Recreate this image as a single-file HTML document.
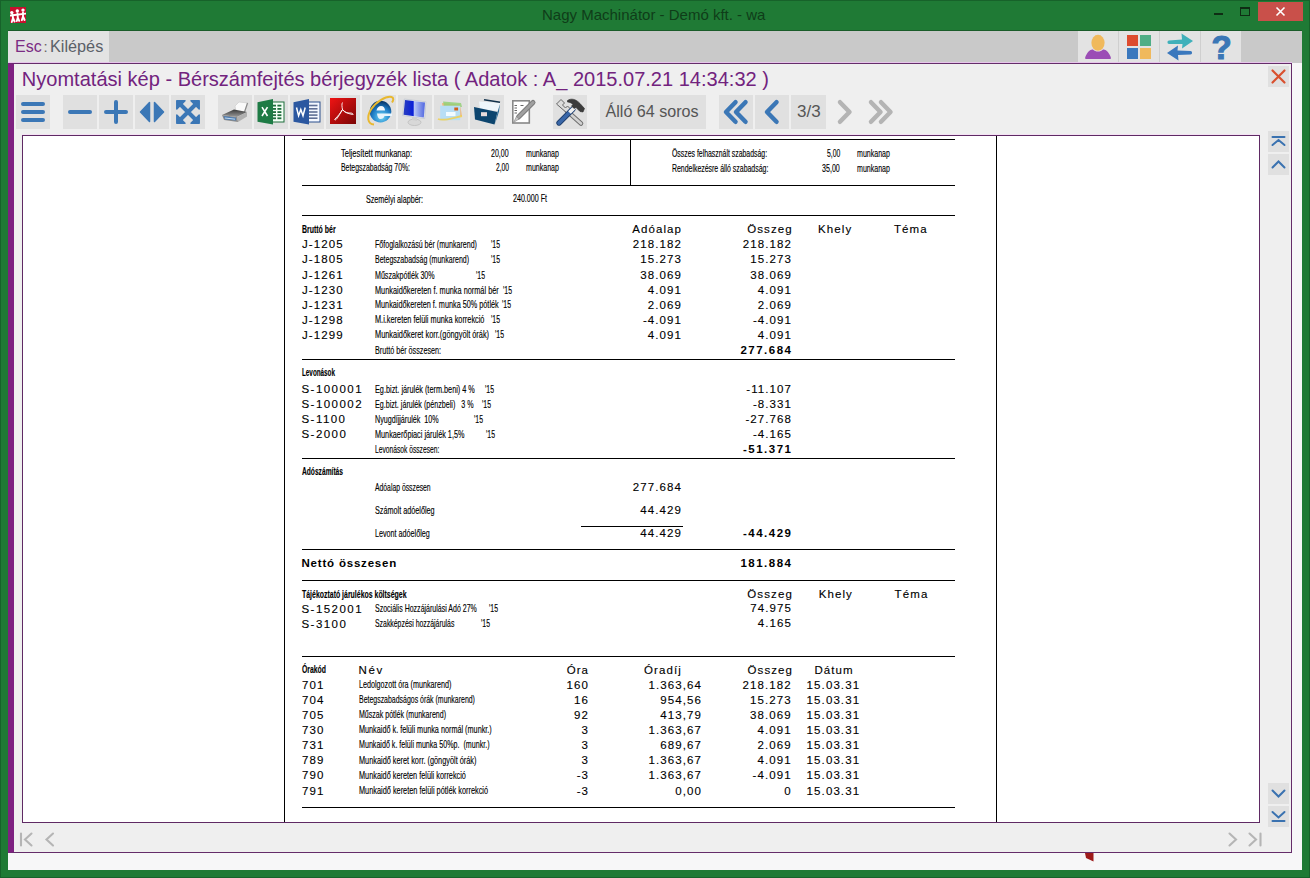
<!DOCTYPE html>
<html><head><meta charset="utf-8">
<style>
*{margin:0;padding:0;box-sizing:border-box}
html,body{width:1310px;height:878px;overflow:hidden;background:#1f7a35;font-family:"Liberation Sans",sans-serif}
.a{position:absolute}
#outer{left:0;top:0;width:1310px;height:878px;border:1px solid #17622a}
.tb{background:#e0e0e0}
.n{position:absolute;font-size:11.5px;letter-spacing:1.1px;color:#000;-webkit-text-stroke:0.12px #000;white-space:nowrap;line-height:1}
.c{position:absolute;font-size:11px;color:#000;-webkit-text-stroke:0.15px #000;white-space:nowrap;line-height:1;transform-origin:0 0}
.r{text-align:right}
.hl{position:absolute;height:1px;background:#000}
</style></head><body>
<div id="outer" class="a"></div>
<!-- title bar -->
<svg class="a" style="left:10px;top:7px" width="16" height="16" viewBox="10 7 16 16"><rect x="10" y="7" width="16" height="16" fill="#c7102e"/>
<g fill="#fff"><circle cx="11.8" cy="12.6" r="1.7"/><circle cx="17.3" cy="11" r="1.7"/><circle cx="23" cy="10.1" r="1.7"/></g>
<g stroke="#fff" stroke-width="1.9" stroke-linecap="round" fill="none">
<path d="M10.6 15.5L25.6 13.6"/>
<path d="M12.5 14.5L13 18M13 18L11.8 22M13 18L14.6 21.5"/>
<path d="M17.5 13.5L17.8 17.5M17.8 17.5L16.8 21M17.8 17.5L19.2 20.8"/>
<path d="M23 12.5L23 16.5M23 16.5L21.8 20.2M23 16.5L24.6 20"/>
</g></svg>
<div class="a" style="left:542px;top:6px;font-size:15px;color:#0f3d19;white-space:nowrap">Nagy Machinátor - Demó kft. - wa</div>
<div class="a" style="left:1214px;top:13px;width:9px;height:2px;background:#0f2d14"></div>
<div class="a" style="left:1240px;top:7px;width:10px;height:9px;border:1px solid #0f2d14;border-top-width:2px"></div>
<div class="a" style="left:1258px;top:2px;width:45px;height:19px;background:#c9504a"></div>
<svg class="a" style="left:1258px;top:2px" width="45" height="19" viewBox="0 0 45 19"><path d="M18.5 5.5L26.5 13.5M26.5 5.5L18.5 13.5" stroke="#fff" stroke-width="1.6"/></svg>

<!-- client -->
<div class="a" style="left:8px;top:30px;width:1294px;height:1px;background:#1a5c2a"></div>
<div class="a" style="left:8px;top:31px;width:1294px;height:839px;background:#f7f7f8"></div>
<div class="a" style="left:8px;top:31px;width:1294px;height:32px;background:#c9c9c9"></div>
<div class="a" style="left:8px;top:31px;width:101px;height:31px;background:#e3e3e3"></div>
<div class="a" style="left:14.5px;top:37px;font-size:17px;line-height:20px;color:#7b2c84;white-space:nowrap;transform:scaleX(0.94);transform-origin:0 0">Esc</div>
<div class="a" style="left:43.5px;top:37px;font-size:15px;line-height:20px;color:#666;white-space:nowrap">:</div>
<div class="a" style="left:49.5px;top:37px;font-size:17px;line-height:20px;color:#5b6068;white-space:nowrap;transform:scaleX(0.955);transform-origin:0 0">Kilépés</div>
<div class="a" style="left:1078px;top:31px;width:163px;height:31px;background:#e3e3e3"></div>
<div class="a" style="left:1118px;top:31px;width:1px;height:31px;background:#cfcfcf"></div>
<div class="a" style="left:1159px;top:31px;width:1px;height:31px;background:#cfcfcf"></div>
<div class="a" style="left:1200px;top:31px;width:1px;height:31px;background:#cfcfcf"></div>
<svg class="a" style="left:1078px;top:31px" width="163" height="31" viewBox="1078 31 163 31">
<ellipse cx="1098" cy="42.8" rx="6.6" ry="8" fill="#f0b95c"/>
<path d="M1086 59C1084.5 59 1085 57 1086.5 54.5C1088.5 50.5 1091 49.5 1093 49.5C1094.5 51 1096 51.5 1098 51.5C1100 51.5 1101.5 51 1103 49.5C1105 49.5 1107.5 50.5 1109.5 54.5C1111 57 1111.5 59 1110 59Z" fill="#9b4db5"/>
<rect x="1127" y="35" width="11" height="11" fill="#dd4b2e"/>
<rect x="1140" y="35" width="11" height="11" fill="#4fae86"/>
<rect x="1127" y="48" width="11" height="11" fill="#3a78bd"/>
<rect x="1140" y="48" width="11" height="11" fill="#f0b95c"/>
<path d="M1169 40.5L1182 39.5L1181.5 33.5L1193 41L1182 48.5L1182.5 44L1169 44C1167 44 1167 40.5 1169 40.5Z" fill="#3fb0ba"/>
<path d="M1190.5 54.5L1178 55L1178.5 60.5L1167 53L1178 45.5L1177.5 50.5L1190.5 51C1192.5 51 1192.5 54.5 1190.5 54.5Z" fill="#3a78bd"/>
<text x="1221.5" y="59" font-family="Liberation Sans" font-weight="bold" font-size="33" fill="#3b77b6" stroke="#3b77b6" stroke-width="1.2" text-anchor="middle">?</text>
</svg>

<!-- purple frame -->
<div class="a" style="left:8px;top:62px;width:1284px;height:1px;background:#e6c6ea"></div>
<div class="a" style="left:8px;top:63px;width:1284px;height:790px;border:1px solid #652d6a;border-left:6px solid #7e2181;background:#efefef"></div>
<div class="a" style="left:21.8px;top:68px;font-size:20.05px;color:#72237e;white-space:nowrap">Nyomtatási kép - Bérszámfejtés bérjegyzék lista ( Adatok : A_ 2015.07.21 14:34:32 )</div>

<!-- toolbar -->
<div class="a tb" style="left:16px;top:95px;width:34px;height:34px"></div>
<div class="a tb" style="left:63px;top:95px;width:34px;height:34px"></div>
<div class="a tb" style="left:99px;top:95px;width:34px;height:34px"></div>
<div class="a tb" style="left:135px;top:95px;width:34px;height:34px"></div>
<div class="a tb" style="left:171px;top:95px;width:34px;height:34px"></div>
<div class="a tb" style="left:218px;top:95px;width:34px;height:34px"></div>
<div class="a tb" style="left:254px;top:95px;width:34px;height:34px"></div>
<div class="a tb" style="left:290px;top:95px;width:34px;height:34px"></div>
<div class="a tb" style="left:326px;top:95px;width:34px;height:34px"></div>
<div class="a tb" style="left:362px;top:95px;width:34px;height:34px"></div>
<div class="a tb" style="left:398px;top:95px;width:34px;height:34px"></div>
<div class="a tb" style="left:434px;top:95px;width:34px;height:34px"></div>
<div class="a tb" style="left:470px;top:95px;width:34px;height:34px"></div>
<div class="a tb" style="left:553px;top:95px;width:34px;height:34px"></div>
<div class="a tb" style="left:600px;top:95px;width:106px;height:34px"></div>
<div class="a tb" style="left:719px;top:95px;width:34px;height:34px"></div>
<div class="a tb" style="left:755px;top:95px;width:34px;height:34px"></div>
<div class="a tb" style="left:791px;top:95px;width:35px;height:34px"></div>
<div class="a" style="left:605.5px;top:101.6px;font-size:16.1px;color:#555;white-space:nowrap">Álló 64 soros</div>
<div class="a" style="left:797px;top:101.5px;font-size:17px;color:#555;white-space:nowrap">3/3</div>
<svg class="a" style="left:0;top:90px" width="900" height="45" viewBox="0 90 900 45">
<g stroke="#3b77b6" stroke-width="4" stroke-linecap="round" fill="none">
<path d="M23 104H43M23 112H43M23 120H43"/>
<path d="M70 112H90"/>
<path d="M106 112H126M116 102V122"/>
</g>
<g fill="#3b77b6" stroke="#3b77b6" stroke-width="1.5" stroke-linejoin="round">
<path d="M149.5 102.5L140.5 112L149.5 121.5Z"/>
<path d="M154.5 102.5L163.5 112L154.5 121.5Z"/>
<path d="M176.8 100.8H185L176.8 109Z"/><path d="M199.2 100.8H191L199.2 109Z"/>
<path d="M176.8 123.2H185L176.8 115Z"/><path d="M199.2 123.2H191L199.2 115Z"/>
</g>
<path d="M179 103L197 121M197 103L179 121" stroke="#3b77b6" stroke-width="4"/>
<g stroke-width="4.5" stroke-linecap="round" stroke-linejoin="round" fill="none">
<path stroke="#3b77b6" d="M735.5 102.2L726 112L735.5 121.8M745.5 102.2L736 112L745.5 121.8"/>
<path stroke="#3b77b6" d="M776.5 102.2L767 112L776.5 121.8"/>
<path stroke="#b4b4b4" d="M840 102.2L849.5 112L840 121.8"/>
<path stroke="#b4b4b4" d="M871 102.2L880.5 112L871 121.8M881 102.2L890.5 112L881 121.8"/>
</g>
</svg>
<svg class="a" style="left:210px;top:90px" width="390" height="45" viewBox="210 90 390 45">
<defs>
<linearGradient id="pdfg" x1="0" y1="0" x2="1" y2="1"><stop offset="0" stop-color="#f01414"/><stop offset="1" stop-color="#7a0505"/></linearGradient>
<radialGradient id="ieg" cx="0.55" cy="0.75" r="0.7"><stop offset="0" stop-color="#6fd6f5"/><stop offset="0.6" stop-color="#1f7ec8"/><stop offset="1" stop-color="#0b3a6e"/></radialGradient>
<linearGradient id="mong" x1="0" y1="0" x2="1" y2="0"><stop offset="0" stop-color="#2a3fc0"/><stop offset="0.45" stop-color="#0a1fd8"/><stop offset="0.5" stop-color="#b9c7f5"/><stop offset="1" stop-color="#5066e0"/></linearGradient>
<linearGradient id="prg" x1="0" y1="0" x2="0" y2="1"><stop offset="0" stop-color="#3a3a3a"/><stop offset="1" stop-color="#9a9a9a"/></linearGradient>
</defs>
<!-- printer -->
<path d="M235 106L239 102L248 103L245 111.5L236 111.5Z" fill="#fafafa" stroke="#c8c8c8" stroke-width="0.6"/>
<path d="M247.5 103L244.5 112" stroke="#8a8a8a" stroke-width="1.2"/>
<path d="M222 115L234 109.5L247 112L237 117Z" fill="url(#prg)"/>
<path d="M237 117L247 112L247 116.5L238 122Z" fill="#b0b0b0"/>
<path d="M222 115L237 117L238 122L224 120Z" fill="#8c8c8c"/>
<path d="M223.5 116L236 117.8L236 120.5L225 119.5Z" fill="#4f7fb5"/>
<path d="M225 118L235 119.2" stroke="#cfe3f5" stroke-width="0.9"/>
<!-- excel -->
<rect x="272.5" y="102" width="11.5" height="20" fill="#f4fff6" stroke="#1e6e3c" stroke-width="1"/>
<g fill="#1e6e3c"><rect x="273" y="104.7" width="3" height="1.8"/><rect x="277.4" y="104.7" width="4" height="1.8"/><rect x="273" y="108" width="3" height="1.8"/><rect x="277.4" y="108" width="4" height="1.8"/><rect x="273" y="111.2" width="3" height="1.8"/><rect x="277.4" y="111.2" width="4" height="1.8"/><rect x="273" y="114.3" width="3" height="1.8"/><rect x="277.4" y="114.3" width="4" height="1.8"/><rect x="273" y="117.4" width="3" height="1.8"/><rect x="277.4" y="117.4" width="4" height="1.8"/></g>
<path d="M257.5 102.2L273 99L273 124.5L257.5 121.7Z" fill="#1e7b45"/>
<path d="M262 107.2L267.5 116M267.5 107.2L262 116" stroke="#fff" stroke-width="1.6"/>
<!-- word -->
<rect x="308.5" y="102" width="11.5" height="20" fill="#f4f8ff" stroke="#2b4f8c" stroke-width="1"/>
<g fill="#5f6f95"><rect x="309" y="104.7" width="8.5" height="1.6"/><rect x="309" y="108" width="8.5" height="1.6"/><rect x="309" y="111.2" width="8.5" height="1.6"/><rect x="309" y="114.3" width="8.5" height="1.6"/><rect x="309" y="117.4" width="8.5" height="1.6"/></g>
<path d="M293.5 102.2L309 99L309 124.5L293.5 121.7Z" fill="#2b57a0"/>
<path d="M296.5 107.5L298.6 115.7L300.8 109.5L303 115.7L305.2 107.5" stroke="#fff" stroke-width="1.5" fill="none" stroke-linejoin="miter"/>
<!-- pdf -->
<rect x="330" y="98" width="26" height="26" fill="url(#pdfg)"/>
<path d="M342.5 102.5C341.5 104 342 107 342.5 109.5C340.5 113 338 116 335 119C334 120 335.5 120.5 336.5 119C338.5 116.5 340.5 113 342.5 109.5C344.5 112 347.5 113.5 352.5 114.5C354 115 353 113 350.5 113C347 113 345 113 342.5 109.5" stroke="#fff" stroke-width="0.9" fill="none"/>
<!-- ie -->
<circle cx="380.5" cy="111.6" r="10.8" fill="url(#ieg)"/>
<path d="M376.5 110.5C377 107.5 379 106 381 106C383.5 106 385 107.8 385 110.5Z" fill="#f4f8fc"/>
<path d="M377 113.5H392V116H384.5C384 118 382.5 119 380.5 119C378.5 119 377.3 117 377 113.5Z" fill="#e8f4fc"/>
<path d="M374 124.5C367.5 124 366.5 117 371 109.5C376 101.5 386 96 391.5 97C394 97.5 393.5 100.5 392 102.5" fill="none" stroke="#e8b830" stroke-width="2"/>
<!-- monitor -->
<ellipse cx="414.5" cy="122.3" rx="6.5" ry="3.2" fill="#d8d8d8" stroke="#bdbdbd" stroke-width="0.8"/>
<path d="M412 117L417 118L417 121L412 120Z" fill="#cfcfcf"/>
<path d="M404.3 99L426 101.8L424.7 118.6L402.5 115.6Z" fill="#e4e8ee" stroke="#c4c8d0" stroke-width="0.8"/>
<path d="M405 100L425 102.6L423.8 117.5L403.5 114.8Z" fill="url(#mong)"/>
<!-- mail -->
<path d="M442 103L460 104.5L462 116L444 117Z" fill="#f5b06a" opacity="0.8"/>
<path d="M443 101.5L461 103L462 107L444 106Z" fill="#8fd070" opacity="0.8"/>
<rect x="440.2" y="105.7" width="20" height="14.5" fill="#b8def5"/>
<rect x="454.3" y="107.5" width="3.8" height="3" fill="#d0601a"/>
<rect x="446" y="112" width="9.5" height="4" fill="#f2fbff"/>
<path d="M438 119C444 121.5 452 118 462 116" stroke="#f0d050" stroke-width="1.8" fill="none" opacity="0.85"/>
<!-- cabinet -->
<path d="M479 101.5L500 103L499 111L480 109Z" fill="#eef6fb"/>
<path d="M484 99.8L500 102.3" stroke="#10304a" stroke-width="1.4"/>
<path d="M474 107L497.5 112L494.5 124.5L475 119.5Z" fill="#0d456e"/>
<path d="M497.5 112L500 104L499 111.5L495 124Z" fill="#2a6a94"/>
<rect x="481" y="112.2" width="6" height="4" fill="#e8dcdc" stroke="#cfc" stroke-width="0"/>
<!-- notepad -->
<rect x="512.8" y="100.8" width="16.5" height="22.2" fill="#fff" stroke="#888" stroke-width="1.6"/>
<g stroke="#555" stroke-width="0.9"><path d="M514.5 105.5H517M520.5 105.5H523.5M514.5 108H517M514.5 110.5H517M514.5 113H517"/></g>
<path d="M533 102.5L518.5 117" stroke="#7c7c7c" stroke-width="5" stroke-linecap="round"/><path d="M533 102.5L518.5 117" stroke="#a0a0a0" stroke-width="3" stroke-linecap="round"/><path d="M516.5 116.5L519 119L513.5 122.5Z" fill="#c8c8c8" stroke="#888" stroke-width="0.6"/>
<!-- tools -->
<path d="M567 111L581 123.5" stroke="#6e6e6e" stroke-width="4.6" stroke-linecap="round"/>
<path d="M567 111L581 123.5" stroke="#d2d2d2" stroke-width="2.6" stroke-linecap="round"/>
<path d="M556.5 104L561 99.5L564.5 103L562.5 105L565.5 108L567.5 106L571 109.5L567.5 113.5Z" fill="#dcdcdc" stroke="#666" stroke-width="1"/>
<path d="M573 109L559 123" stroke="#1f3f6e" stroke-width="5.4" stroke-linecap="round"/>
<path d="M573 109L559 123" stroke="#3a67a8" stroke-width="3.6" stroke-linecap="round"/>
<path d="M569.5 112.5L575 107" stroke="#f0f0f0" stroke-width="3.8"/>
<path d="M567.5 100.5C571 98 576 99 580 103.5L584.5 108.5L583 112L580 111.5L576 107.5L574 108.5L571.5 106L573 104.5C571.5 103 569.5 102 567.5 102Z" fill="#3c3c3c" stroke="#2a2a2a" stroke-width="0.6"/>
</svg>
<!-- side buttons -->
<div class="a tb" style="left:1268px;top:66px;width:21px;height:21px"></div>
<svg class="a" style="left:1268px;top:66px" width="21" height="21" viewBox="0 0 21 21"><path d="M4.5 4.5L16.5 16.5M16.5 4.5L4.5 16.5" stroke="#d9502e" stroke-width="2.2" stroke-linecap="round"/></svg>
<div class="a tb" style="left:1268px;top:131px;width:21px;height:21px"></div>
<div class="a tb" style="left:1268px;top:154px;width:21px;height:21px"></div>
<div class="a tb" style="left:1268px;top:783px;width:21px;height:21px"></div>
<div class="a tb" style="left:1268px;top:806px;width:21px;height:21px"></div>
<svg class="a" style="left:1268px;top:131px" width="21" height="700" viewBox="1268 131 21 700">
<g stroke="#3a72b0" stroke-width="2" stroke-linecap="round" fill="none">
<path d="M1272.5 137H1284.5M1272.5 145L1278.5 140L1284.5 145"/>
<path d="M1272.5 167.5L1278.5 161.5L1284.5 167.5"/>
<path d="M1272.5 790.5L1278.5 796.5L1284.5 790.5"/>
<path d="M1272.5 812L1278.5 817.5L1284.5 812M1272.5 821H1284.5"/>
</g></svg>
<svg class="a" style="left:0;top:823px" width="1310" height="45" viewBox="0 823 1310 45">
<g stroke="#b5b5b5" stroke-width="2.1" fill="none" stroke-linecap="round">
<path d="M21 833.5V845.5M31.5 833.5L25 839.5L31.5 845.5"/>
<path d="M53 833.5L46.5 839.5L53 845.5"/>
<path d="M1229.5 833.5L1236 839.5L1229.5 845.5"/>
<path d="M1249.5 833.5L1256 839.5L1249.5 845.5M1260.5 833.5V845.5"/>
</g>
<path d="M1085 853H1093.5V861.5L1086 858Z" fill="#9e1b1b"/>
</svg>
<div class="a" style="left:22px;top:134px;width:1238px;height:1px;background:#f4e2f4"></div>
<!-- doc frame -->
<div class="a" style="left:22px;top:135px;width:1238px;height:688px;border:1px solid #5f2a64;background:#fff;overflow:hidden">
</div>
<!--DOC-->
<div class="a" style="left:284px;top:136px;width:1px;height:686px;background:#000"></div>
<div class="a" style="left:996px;top:136px;width:1px;height:686px;background:#000"></div>
<div class="hl" style="left:302px;top:139px;width:653px"></div>
<div class="a" style="left:630px;top:139px;width:1px;height:46px;background:#000"></div>
<div class="hl" style="left:302px;top:185px;width:653px"></div>
<div class="hl" style="left:302px;top:215px;width:653px"></div>
<div class="c" style="left:341.0px;top:147.7px;transform:scaleX(0.683)">Teljesített munkanap:</div>
<div class="c" style="left:341.0px;top:162.3px;transform:scaleX(0.627)">Betegszabadság 70%:</div>
<div class="c" style="left:491.0px;top:147.7px;transform:scaleX(0.639)">20,00</div>
<div class="c" style="left:495.5px;top:162.3px;transform:scaleX(0.612)">2,00</div>
<div class="c" style="left:526.0px;top:147.7px;transform:scaleX(0.642)">munkanap</div>
<div class="c" style="left:526.0px;top:162.3px;transform:scaleX(0.642)">munkanap</div>
<div class="c" style="left:672.0px;top:148.0px;transform:scaleX(0.627)">Összes felhasznált szabadság:</div>
<div class="c" style="left:672.0px;top:162.5px;transform:scaleX(0.630)">Rendelkezésre álló szabadság:</div>
<div class="c" style="left:826.5px;top:148.0px;transform:scaleX(0.622)">5,00</div>
<div class="c" style="left:822.0px;top:162.5px;transform:scaleX(0.646)">35,00</div>
<div class="c" style="left:857.0px;top:148.0px;transform:scaleX(0.642)">munkanap</div>
<div class="c" style="left:857.0px;top:162.5px;transform:scaleX(0.642)">munkanap</div>
<div class="c" style="left:366.0px;top:193.5px;transform:scaleX(0.652)">Személyi alapbér:</div>
<div class="c" style="left:513.0px;top:193.2px;transform:scaleX(0.647)">240.000 Ft</div>
<div class="c" style="left:302.0px;top:223.5px;font-weight:bold;transform:scaleX(0.632)">Bruttó bér</div>
<div class="n" style="right:627.9px;top:223.9px;">Adóalap</div>
<div class="n" style="right:517.2px;top:223.9px;">Összeg</div>
<div class="n" style="left:818.0px;top:223.9px;">Khely</div>
<div class="n" style="left:894.0px;top:223.9px;">Téma</div>
<div class="n" style="left:302.0px;top:238.9px;">J-1205</div>
<div class="c" style="left:375.0px;top:238.5px;transform:scaleX(0.644)">Főfoglalkozású bér (munkarend)</div>
<div class="c" style="left:491.4px;top:238.5px;transform:scaleX(0.627)">'15</div>
<div class="n" style="right:627.9px;top:238.9px;">218.182</div>
<div class="n" style="right:517.9px;top:238.9px;">218.182</div>
<div class="n" style="left:302.0px;top:253.9px;">J-1805</div>
<div class="c" style="left:375.0px;top:253.5px;transform:scaleX(0.638)">Betegszabadság (munkarend)</div>
<div class="c" style="left:491.4px;top:253.5px;transform:scaleX(0.627)">'15</div>
<div class="n" style="right:627.9px;top:253.9px;">15.273</div>
<div class="n" style="right:517.9px;top:253.9px;">15.273</div>
<div class="n" style="left:302.0px;top:269.9px;">J-1261</div>
<div class="c" style="left:375.0px;top:269.5px;transform:scaleX(0.646)">Műszakpótlék 30%</div>
<div class="c" style="left:476.0px;top:269.5px;transform:scaleX(0.627)">'15</div>
<div class="n" style="right:627.9px;top:269.9px;">38.069</div>
<div class="n" style="right:517.9px;top:269.9px;">38.069</div>
<div class="n" style="left:302.0px;top:284.9px;">J-1230</div>
<div class="c" style="left:375.0px;top:284.5px;transform:scaleX(0.668)">Munkaidőkereten f. munka normál bér</div>
<div class="c" style="left:503.4px;top:284.5px;transform:scaleX(0.627)">'15</div>
<div class="n" style="right:627.9px;top:284.9px;">4.091</div>
<div class="n" style="right:517.9px;top:284.9px;">4.091</div>
<div class="n" style="left:302.0px;top:299.8px;">J-1231</div>
<div class="c" style="left:375.0px;top:299.4px;transform:scaleX(0.661)">Munkaidőkereten f. munka 50% pótlék</div>
<div class="c" style="left:502.0px;top:299.4px;transform:scaleX(0.627)">'15</div>
<div class="n" style="right:627.9px;top:299.8px;">2.069</div>
<div class="n" style="right:517.9px;top:299.8px;">2.069</div>
<div class="n" style="left:302.0px;top:314.8px;">J-1298</div>
<div class="c" style="left:375.0px;top:314.4px;transform:scaleX(0.668)">M.i.kereten felüli munka korrekció</div>
<div class="c" style="left:491.4px;top:314.4px;transform:scaleX(0.627)">'15</div>
<div class="n" style="right:627.9px;top:314.8px;">-4.091</div>
<div class="n" style="right:517.9px;top:314.8px;">-4.091</div>
<div class="n" style="left:302.0px;top:329.8px;">J-1299</div>
<div class="c" style="left:375.0px;top:329.4px;transform:scaleX(0.671)">Munkaidőkeret korr.(göngyölt órák)</div>
<div class="c" style="left:495.4px;top:329.4px;transform:scaleX(0.627)">'15</div>
<div class="n" style="right:627.9px;top:329.8px;">4.091</div>
<div class="n" style="right:517.9px;top:329.8px;">4.091</div>
<div class="c" style="left:375.0px;top:344.5px;transform:scaleX(0.654)">Bruttó bér összesen:</div>
<div class="n" style="right:517.5px;top:344.9px;font-weight:bold;-webkit-text-stroke:0;letter-spacing:1.5px;">277.684</div>
<div class="hl" style="left:302px;top:359px;width:653px"></div>
<div class="c" style="left:302.0px;top:367.4px;font-weight:bold;transform:scaleX(0.574)">Levonások</div>
<div class="n" style="left:301.5px;top:384.0px;letter-spacing:1.45px;">S-100001</div>
<div class="c" style="left:375.0px;top:383.6px;transform:scaleX(0.664)">Eg.bizt. járulék (term.beni) 4 %</div>
<div class="c" style="left:484.5px;top:383.6px;transform:scaleX(0.627)">'15</div>
<div class="n" style="right:517.9px;top:384.0px;">-11.107</div>
<div class="n" style="left:301.5px;top:399.1px;letter-spacing:1.45px;">S-100002</div>
<div class="c" style="left:375.0px;top:398.7px;transform:scaleX(0.650)">Eg.bizt. járulék (pénzbeli)&nbsp;&nbsp; 3 %</div>
<div class="c" style="left:481.6px;top:398.7px;transform:scaleX(0.627)">'15</div>
<div class="n" style="right:517.9px;top:399.1px;">-8.331</div>
<div class="n" style="left:301.5px;top:414.1px;letter-spacing:1.45px;">S-1100</div>
<div class="c" style="left:375.0px;top:413.7px;transform:scaleX(0.651)">Nyugdíjjárulék&nbsp; 10%</div>
<div class="c" style="left:474.2px;top:413.7px;transform:scaleX(0.627)">'15</div>
<div class="n" style="right:517.9px;top:414.1px;">-27.768</div>
<div class="n" style="left:301.5px;top:429.1px;letter-spacing:1.45px;">S-2000</div>
<div class="c" style="left:375.0px;top:428.7px;transform:scaleX(0.662)">Munkaerőpiaci járulék 1,5%</div>
<div class="c" style="left:486.2px;top:428.7px;transform:scaleX(0.627)">'15</div>
<div class="n" style="right:517.9px;top:429.1px;">-4.165</div>
<div class="c" style="left:375.0px;top:443.7px;transform:scaleX(0.608)">Levonások összesen:</div>
<div class="n" style="right:517.5px;top:444.1px;font-weight:bold;-webkit-text-stroke:0;letter-spacing:1.5px;">-51.371</div>
<div class="hl" style="left:302px;top:458px;width:653px"></div>
<div class="c" style="left:302.0px;top:466.3px;font-weight:bold;transform:scaleX(0.604)">Adószámítás</div>
<div class="c" style="left:375.0px;top:481.5px;transform:scaleX(0.619)">Adóalap összesen</div>
<div class="n" style="right:627.9px;top:481.9px;">277.684</div>
<div class="c" style="left:375.0px;top:504.6px;transform:scaleX(0.659)">Számolt adóelőleg</div>
<div class="n" style="right:627.9px;top:505.0px;">44.429</div>
<div class="hl" style="left:581px;top:526px;width:102px"></div>
<div class="c" style="left:375.0px;top:527.5px;transform:scaleX(0.654)">Levont adóelőleg</div>
<div class="n" style="right:627.9px;top:527.9px;">44.429</div>
<div class="n" style="right:517.5px;top:527.9px;font-weight:bold;-webkit-text-stroke:0;letter-spacing:1.5px;">-44.429</div>
<div class="hl" style="left:302px;top:549px;width:653px"></div>
<div class="n" style="left:301.5px;top:558.1px;font-weight:bold;-webkit-text-stroke:0;letter-spacing:0.8px;">Nettó összesen</div>
<div class="n" style="right:517.5px;top:557.6px;font-weight:bold;-webkit-text-stroke:0;letter-spacing:1.5px;">181.884</div>
<div class="hl" style="left:302px;top:580px;width:653px"></div>
<div class="c" style="left:302.0px;top:588.5px;font-weight:bold;transform:scaleX(0.631)">Tájékoztató járulékos költségek</div>
<div class="n" style="right:517.1px;top:588.7px;">Összeg</div>
<div class="n" style="left:818.7px;top:588.7px;">Khely</div>
<div class="n" style="left:894.6px;top:588.7px;">Téma</div>
<div class="n" style="left:301.5px;top:603.5px;letter-spacing:1.45px;">S-152001</div>
<div class="c" style="left:375.0px;top:603.1px;transform:scaleX(0.638)">Szociális Hozzájárulási Adó 27%</div>
<div class="c" style="left:488.5px;top:603.1px;transform:scaleX(0.627)">'15</div>
<div class="n" style="right:517.9px;top:603.3px;">74.975</div>
<div class="n" style="left:301.5px;top:618.5px;letter-spacing:1.45px;">S-3100</div>
<div class="c" style="left:375.0px;top:618.1px;transform:scaleX(0.627)">Szakképzési hozzájárulás</div>
<div class="c" style="left:480.5px;top:618.1px;transform:scaleX(0.627)">'15</div>
<div class="n" style="right:517.9px;top:618.1px;">4.165</div>
<div class="hl" style="left:302px;top:656px;width:653px"></div>
<div class="c" style="left:302.0px;top:664.4px;font-weight:bold;transform:scaleX(0.623)">Órakód</div>
<div class="n" style="left:358.6px;top:664.8px;letter-spacing:1.6px;">Név</div>
<div class="n" style="right:720.9px;top:665.1px;">Óra</div>
<div class="n" style="left:644.0px;top:665.1px;">Óradíj</div>
<div class="n" style="right:516.9px;top:665.1px;">Összeg</div>
<div class="n" style="left:814.4px;top:665.1px;">Dátum</div>
<div class="n" style="left:302.0px;top:679.6px;">701</div>
<div class="c" style="left:358.6px;top:679.2px;transform:scaleX(0.654)">Ledolgozott óra (munkarend)</div>
<div class="n" style="right:720.9px;top:679.6px;">160</div>
<div class="n" style="right:607.9px;top:679.6px;">1.363,64</div>
<div class="n" style="right:518.2px;top:679.6px;">218.182</div>
<div class="n" style="left:806.6px;top:679.6px;">15.03.31</div>
<div class="n" style="left:302.0px;top:694.8px;">704</div>
<div class="c" style="left:358.6px;top:694.4px;transform:scaleX(0.632)">Betegszabadságos órák (munkarend)</div>
<div class="n" style="right:720.9px;top:694.8px;">16</div>
<div class="n" style="right:607.9px;top:694.8px;">954,56</div>
<div class="n" style="right:518.2px;top:694.8px;">15.273</div>
<div class="n" style="left:806.6px;top:694.8px;">15.03.31</div>
<div class="n" style="left:302.0px;top:709.6px;">705</div>
<div class="c" style="left:358.6px;top:709.2px;transform:scaleX(0.641)">Műszak pótlék (munkarend)</div>
<div class="n" style="right:720.9px;top:709.6px;">92</div>
<div class="n" style="right:607.9px;top:709.6px;">413,79</div>
<div class="n" style="right:518.2px;top:709.6px;">38.069</div>
<div class="n" style="left:806.6px;top:709.6px;">15.03.31</div>
<div class="n" style="left:302.0px;top:724.8px;">730</div>
<div class="c" style="left:358.6px;top:724.4px;transform:scaleX(0.660)">Munkaidő k. felüli munka normál (munkr.)</div>
<div class="n" style="right:720.9px;top:724.8px;">3</div>
<div class="n" style="right:607.9px;top:724.8px;">1.363,67</div>
<div class="n" style="right:518.2px;top:724.8px;">4.091</div>
<div class="n" style="left:806.6px;top:724.8px;">15.03.31</div>
<div class="n" style="left:302.0px;top:739.8px;">731</div>
<div class="c" style="left:358.6px;top:739.4px;transform:scaleX(0.647)">Munkaidő k. felüli munka 50%p.&nbsp; (munkr.)</div>
<div class="n" style="right:720.9px;top:739.8px;">3</div>
<div class="n" style="right:607.9px;top:739.8px;">689,67</div>
<div class="n" style="right:518.2px;top:739.8px;">2.069</div>
<div class="n" style="left:806.6px;top:739.8px;">15.03.31</div>
<div class="n" style="left:302.0px;top:755.4px;">789</div>
<div class="c" style="left:358.6px;top:755.0px;transform:scaleX(0.667)">Munkaidő keret korr. (göngyölt órák)</div>
<div class="n" style="right:720.9px;top:755.4px;">3</div>
<div class="n" style="right:607.9px;top:755.4px;">1.363,67</div>
<div class="n" style="right:518.2px;top:755.4px;">4.091</div>
<div class="n" style="left:806.6px;top:755.4px;">15.03.31</div>
<div class="n" style="left:302.0px;top:770.3px;">790</div>
<div class="c" style="left:358.6px;top:769.9px;transform:scaleX(0.665)">Munkaidő kereten felüli korrekció</div>
<div class="n" style="right:720.9px;top:770.3px;">-3</div>
<div class="n" style="right:607.9px;top:770.3px;">1.363,67</div>
<div class="n" style="right:518.2px;top:770.3px;">-4.091</div>
<div class="n" style="left:806.6px;top:770.3px;">15.03.31</div>
<div class="n" style="left:302.0px;top:785.6px;">791</div>
<div class="c" style="left:358.6px;top:785.2px;transform:scaleX(0.668)">Munkaidő kereten felüli pótlék korrekció</div>
<div class="n" style="right:720.9px;top:785.6px;">-3</div>
<div class="n" style="right:607.9px;top:785.6px;">0,00</div>
<div class="n" style="right:518.2px;top:785.6px;">0</div>
<div class="n" style="left:806.6px;top:785.6px;">15.03.31</div>
<div class="hl" style="left:302px;top:807px;width:653px"></div>
<!--/DOC-->
</body></html>
